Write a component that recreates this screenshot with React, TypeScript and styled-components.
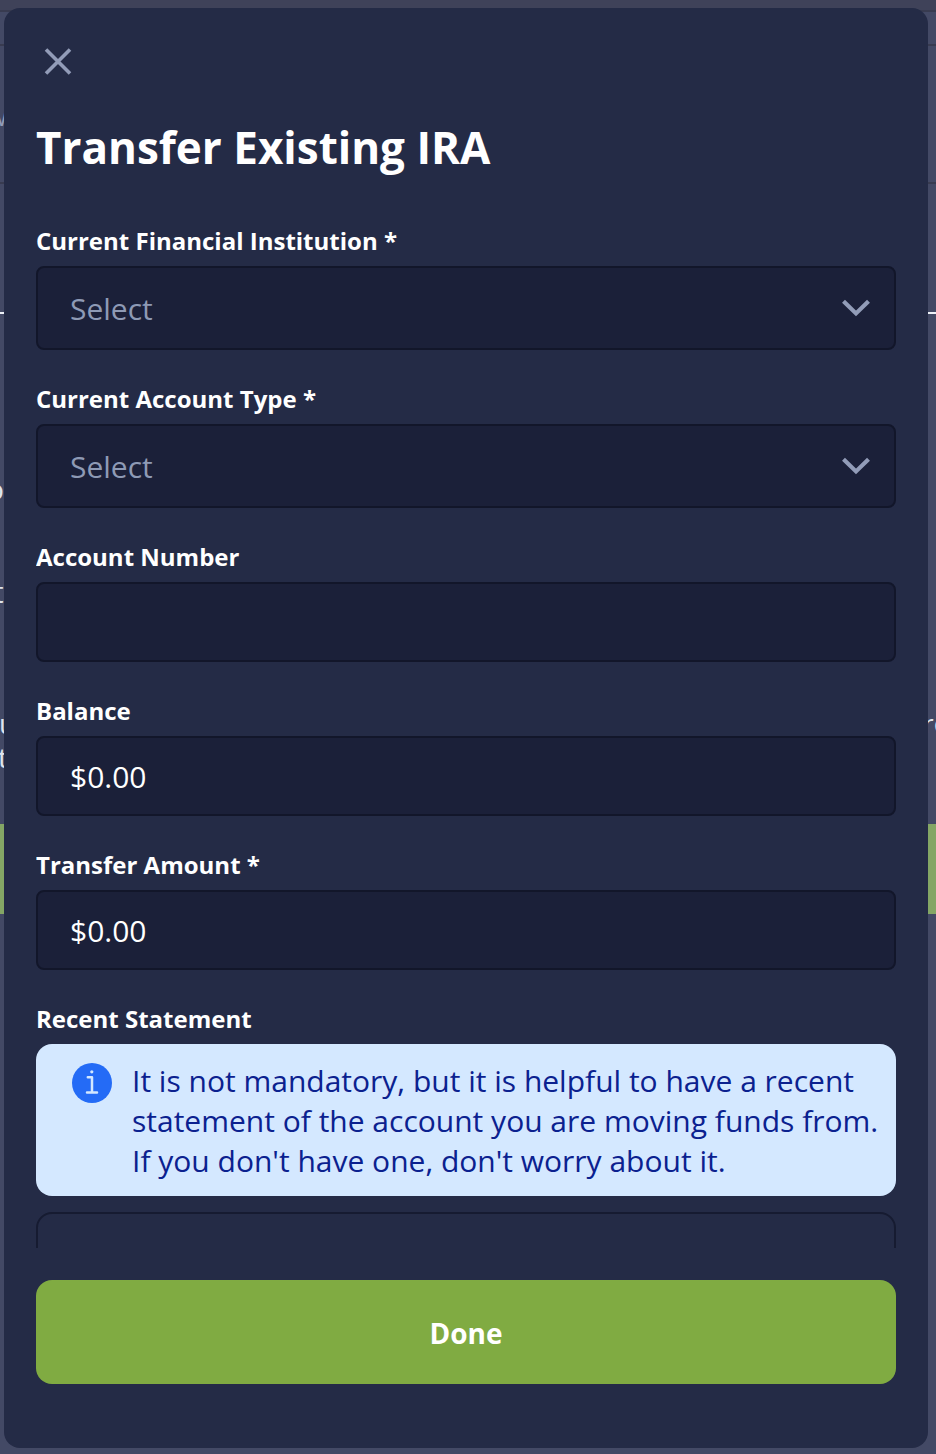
import React from "react";
import styled, { createGlobalStyle } from "styled-components";

const GlobalStyle = createGlobalStyle`
  *, *::before, *::after { box-sizing: border-box; }
  body { margin: 0; background: #434965; }
  body, button, input { font-family: "Open Sans", sans-serif; }
`;

const Screen = styled.div`
  position: relative;
  width: 936px;
  height: 1454px;
  overflow: hidden;
  color: #fff;
`;

const Page = styled.div`
  display: flex;
  flex-direction: column;
  height: 100%;
  background: #434965;
`;

const Band = styled.div<{ $h: number; $bg?: string; $rule?: string }>`
  flex: none;
  height: ${(p) => p.$h}px;
  background: ${(p) => p.$bg ?? "transparent"};
  border-bottom: ${(p) => (p.$rule ? `2px solid ${p.$rule}` : "none")};
`;

const PageText = styled.div<{ $top: number; $shift: number; $size?: number; $color?: string }>`
  display: flex;
  justify-content: space-between;
  height: 34px;
  margin-top: ${(p) => p.$top}px;
  margin-left: ${(p) => p.$shift}px;
  font-size: ${(p) => p.$size ?? 28}px;
  line-height: 34px;
  white-space: nowrap;
  color: ${(p) => p.$color ?? "#dfe4ec"};
`;

const TailText = styled.span`
  flex: none;
  width: 13px;
  font-size: 26px;
`;

const Modal = styled.section`
  position: absolute;
  inset: 8px 8px 6px 4px;
  display: flex;
  flex-direction: column;
  padding: 32px 32px 64px;
  border-radius: 16px;
  background: #242b46;
`;

const CloseButton = styled.button`
  display: flex;
  flex: none;
  width: 44px;
  height: 44px;
  padding: 0;
  border: 0;
  background: none;
`;

const Title = styled.h1`
  flex: none;
  margin: 33px 0 47px;
  font-size: 44px;
  line-height: 60px;
  font-weight: 700;
`;

const Body = styled.div`
  display: flex;
  flex-direction: column;
  flex: 1;
  gap: 32px;
  min-height: 0;
  margin-bottom: 32px;
  overflow: hidden;
`;

const Field = styled.div`
  display: flex;
  flex-direction: column;
  flex: none;
`;

const Label = styled.label`
  margin-bottom: 8px;
  font-size: 24px;
  line-height: 34px;
  font-weight: 700;
`;

const Control = styled.div<{ $select?: boolean }>`
  display: flex;
  align-items: center;
  justify-content: space-between;
  height: ${(p) => (p.$select ? 84 : 80)}px;
  padding: 2px 24px 0 32px;
  border: 2px solid #12162a;
  border-radius: 8px;
  background: #1b2039;
  color: ${(p) => (p.$select ? "#8e9ab5" : "#fff")};
  font-size: 30px;
  line-height: 40px;
`;

const Notice = styled.div`
  display: flex;
  gap: 20px;
  height: 152px;
  padding: 17px 0 15px 36px;
  border-radius: 16px;
  background: #d4e8ff;
  color: #0b218f;
  font-size: 30px;
  line-height: 40px;
  white-space: nowrap;
`;

const InfoIcon = styled.svg`
  flex: none;
  margin-top: 2px;
`;

const UploadBox = styled.div`
  height: 160px;
  margin-top: 16px;
  border: 2px solid #161b31;
  border-radius: 16px;
`;

const DoneButton = styled.button`
  flex: none;
  height: 104px;
  padding: 2px 0 0;
  border: 0;
  border-radius: 16px;
  background: #80ab42;
  color: #fff;
  font-size: 28px;
  font-weight: 700;
`;

const Chevron = () => (
  <svg width="28" height="20" viewBox="0 0 28 20" fill="none" stroke="#929cb8" strokeWidth="4.2">
    <path d="M1.5 2.3 14 14.4 26.5 2.3" />
  </svg>
);

const fields: { label: string; value: string; select?: boolean }[] = [
  { label: "Current Financial Institution *", value: "Select", select: true },
  { label: "Current Account Type *", value: "Select", select: true },
  { label: "Account Number", value: "" },
  { label: "Balance", value: "$0.00" },
  { label: "Transfer Amount *", value: "$0.00" },
];

export default function App() {
  return (
    <Screen>
      <GlobalStyle />
      <Page aria-hidden="true">
        <Band $h={12} $bg="#3f4259" $rule="#383b50" />
        <Band $h={34} $rule="#383b50" />
        <Band $h={138} $rule="#383b50">
          <PageText $top={54} $shift={-12} $size={24} $color="#929cb8">w</PageText>
        </Band>
        <Band $h={130} $rule="#edf1f7" />
        <Band $h={510}>
          <PageText $top={158} $shift={-14} $size={30}>o</PageText>
          <PageText $top={69} $shift={-7} $size={30}>t</PageText>
          <PageText $top={97} $shift={-1}>
            <span>u</span>
            <TailText>re</TailText>
          </PageText>
          <PageText $top={0} $shift={-2}>t</PageText>
        </Band>
        <Band $h={90} $bg="#84a665" />
      </Page>
      <Modal role="dialog" aria-label="Transfer Existing IRA">
        <CloseButton aria-label="Close">
          <svg width="44" height="44" viewBox="0 0 44 44" fill="none" stroke="#929cb8" strokeWidth="3.6">
            <path d="M10 9.6 34 33.6M34 9.6 10 33.6" />
          </svg>
        </CloseButton>
        <Title>Transfer Existing IRA</Title>
        <Body>
          {fields.map((f) => (
            <Field key={f.label}>
              <Label>{f.label}</Label>
              <Control $select={f.select}>
                {f.value}
                {f.select && <Chevron />}
              </Control>
            </Field>
          ))}
          <Field>
            <Label>Recent Statement</Label>
            <Notice>
              <InfoIcon width="40" height="40" viewBox="0 0 40 40" fill="none">
                <circle cx="20" cy="20" r="20" fill="#246bf6" />
                <circle cx="19.8" cy="8.8" r="1.6" fill="#d4e8ff" />
                <path d="M15.8 14.2H20V29.4M15 29.4H25" stroke="#d4e8ff" strokeWidth="2.5" strokeLinecap="round" strokeLinejoin="round" />
              </InfoIcon>
              <div>
                It is not mandatory, but it is helpful to have a recent
                <br />
                statement of the account you are moving funds from.
                <br />
                If you don't have one, don't worry about it.
              </div>
            </Notice>
            <UploadBox />
          </Field>
        </Body>
        <DoneButton>Done</DoneButton>
      </Modal>
    </Screen>
  );
}
